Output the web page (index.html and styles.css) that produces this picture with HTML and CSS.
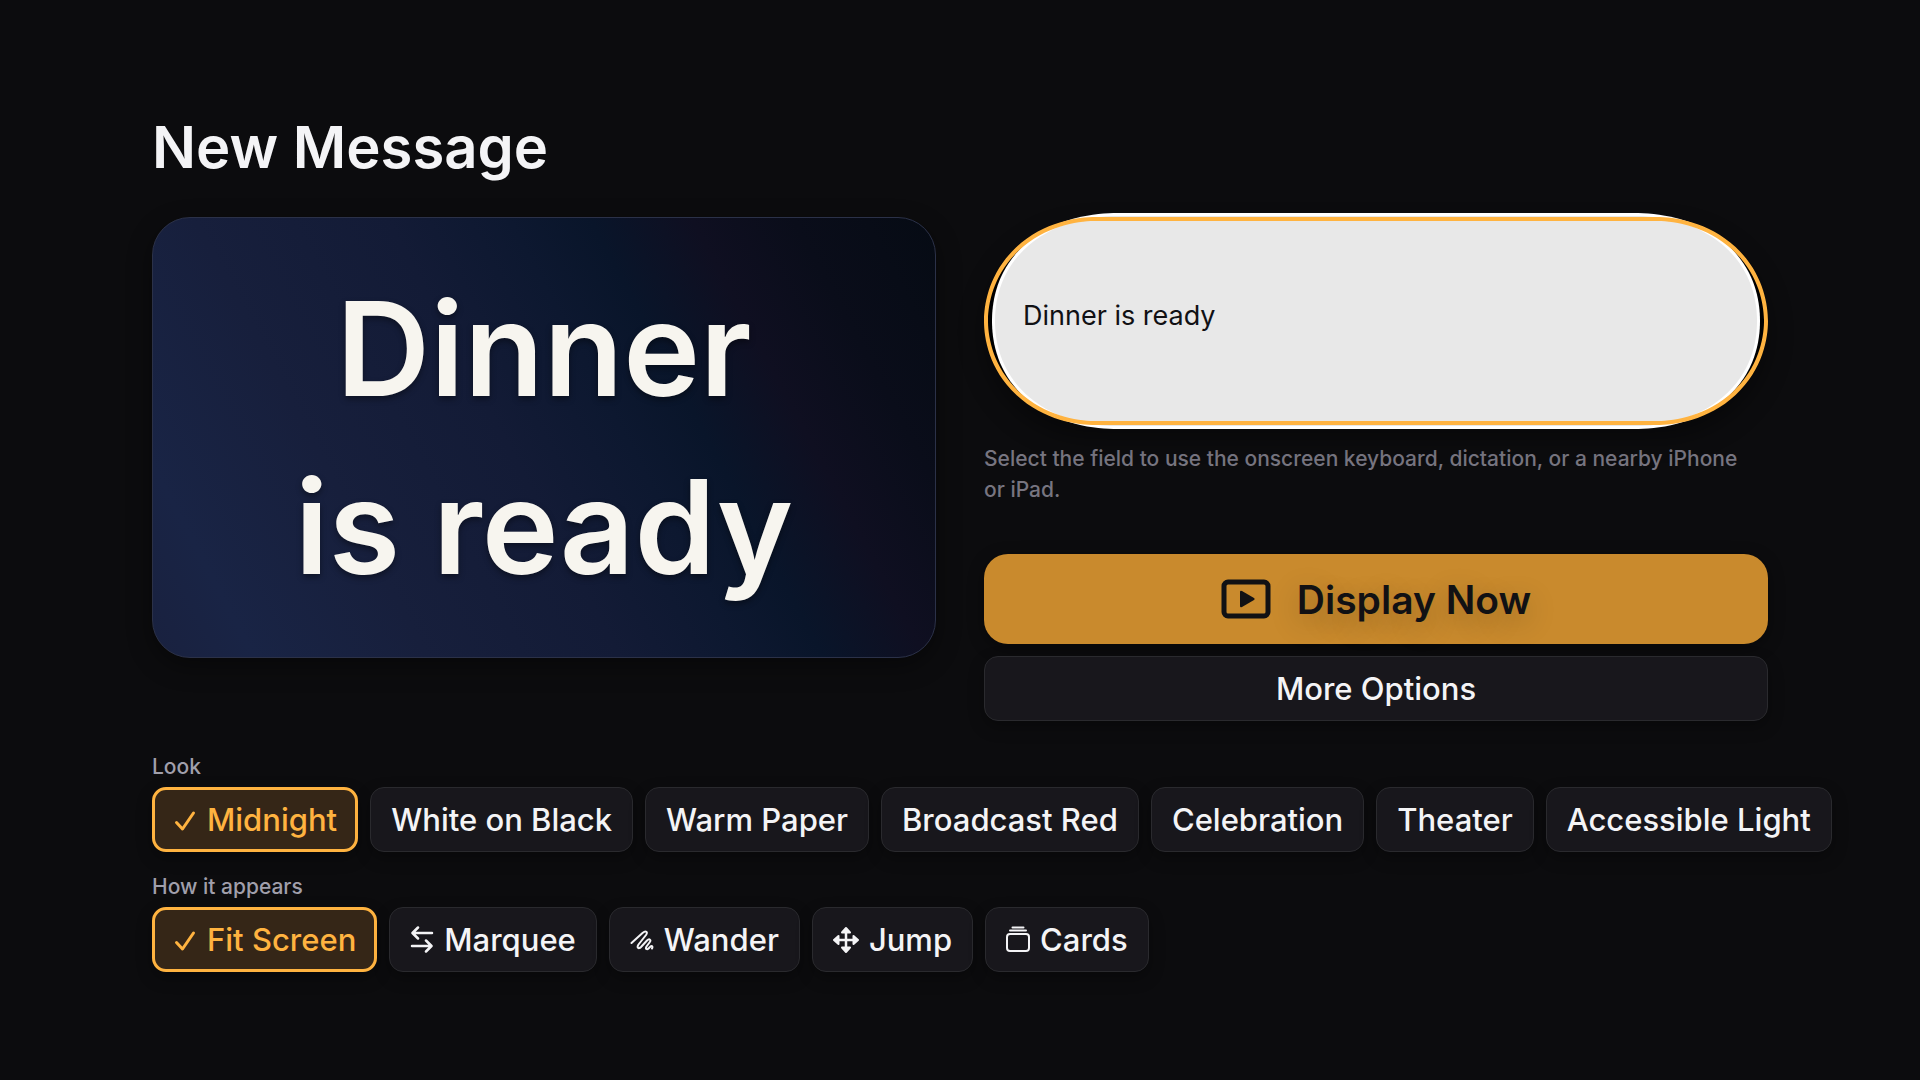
FILE: index.html
```html
<!DOCTYPE html>
<html lang="en">
<head>
  <meta charset="UTF-8">
  <meta name="viewport" content="width=device-width, initial-scale=1.0">
  <title>New Message</title>
  <link rel="stylesheet" href="styles.css">
</head>
<body>
  <main class="page">
    <h1>New Message</h1>

    <div class="editor">
      <!-- Preview -->
      <section class="preview" aria-label="Preview">
        <p>Dinner<br>is ready</p>
      </section>

      <!-- Message field and actions -->
      <form class="compose">
        <div class="field">
          <input type="text" aria-label="Message" aria-describedby="hint" value="Dinner is ready">
        </div>
        <p class="hint" id="hint">Select the field to use the onscreen keyboard, dictation, or a nearby iPhone or iPad.</p>
        <button type="button" class="btn-display">
          <svg width="50" height="40" viewBox="0 0 50 40" aria-hidden="true">
            <rect x="3" y="3" width="44" height="34" rx="4" fill="none" stroke="currentColor" stroke-width="5"/>
            <path d="M19 13v14q0 2 2 1l12-7q1.500-1 0-2l-12-7q-2-1-2 1z" fill="currentColor"/>
          </svg>
          Display Now
        </button>
        <button type="button" class="btn-more">More Options</button>
      </form>
    </div>

    <!-- Look -->
    <section class="group">
      <h2>Look</h2>
      <div class="chips">
        <button type="button" class="chip selected" aria-pressed="true">
          <svg width="24" height="28" viewBox="0 0 24 28" aria-hidden="true"><path d="M3.500 16.500l6 6.500L20.500 7"/></svg>
          Midnight
        </button>
        <button type="button" class="chip">White on Black</button>
        <button type="button" class="chip">Warm Paper</button>
        <button type="button" class="chip">Broadcast Red</button>
        <button type="button" class="chip">Celebration</button>
        <button type="button" class="chip">Theater</button>
        <button type="button" class="chip">Accessible Light</button>
      </div>
    </section>

    <!-- How it appears -->
    <section class="group">
      <h2>How it appears</h2>
      <div class="chips">
        <button type="button" class="chip selected" aria-pressed="true">
          <svg width="24" height="28" viewBox="0 0 24 28" aria-hidden="true"><path d="M3.500 16.500l6 6.500L20.500 7"/></svg>
          Fit Screen
        </button>
        <button type="button" class="chip">
          <svg width="24" height="28" viewBox="0 0 24 28" aria-hidden="true"><path class="medium" d="M22 7H3M8 1.500L2.500 7 8 12.500M2 20h19M16 14.500l5.500 5.500-5.500 5.500"/></svg>
          Marquee
        </button>
        <button type="button" class="chip">
          <svg width="24" height="28" viewBox="0 0 24 28" aria-hidden="true"><path class="thin" d="M1.500 17L12.500 7C16 4 18 6 16 9L8.500 18.500C6.500 21.500 8.500 23.500 11 21L17 14.500C19.500 12 21.500 14 19.500 16.500L16.500 20.500C15 23 17 24 18.500 22.500L20 21C22 19 23 20.500 22 22.500"/></svg>
          Wander
        </button>
        <button type="button" class="chip">
          <svg width="26" height="28" viewBox="0 0 26 28" aria-hidden="true"><path class="medium" d="M13 5v18M4 14h18"/><path class="solid" d="M13 2l4 4.500h-8zM13 26l4-4.500h-8zM1 14l4.500-4v8zM25 14l-4.500-4v8z"/></svg>
          Jump
        </button>
        <button type="button" class="chip">
          <svg width="24" height="28" viewBox="0 0 24 28" aria-hidden="true"><rect class="thin" x="1" y="8" width="22" height="17" rx="3"/><path class="thin" d="M4 4.500h16M6.500 1.500h11"/></svg>
          Cards
        </button>
      </div>
    </section>
  </main>
</body>
</html>
```
FILE: styles.css
```css
:root {
  --bg: #0c0c0e;
  --surface: #18171c;
  --line: #2a2a2e;
  --text: #f4f4f6;
  --muted: #a09fab;
  --faint: #777580;
  --amber: #ffb340;
}

* {
  box-sizing: border-box;
}

body {
  margin: 0;
  min-height: 100vh;
  background: var(--bg);
  color: var(--text);
  font-family: Inter, "Liberation Sans", sans-serif;
  overflow-x: hidden;
}

.page {
  padding: 108px 152px;
}

h1 {
  margin: 0 0 31px;
  font-size: 58px;
  line-height: 78px;
  font-weight: 600;
}

.editor {
  display: grid;
  grid-template-columns: 1fr 1fr;
  gap: 48px;
  align-items: start;
}

.preview {
  display: flex;
  align-items: center;
  justify-content: center;
  aspect-ratio: 16 / 9;
  border: 1px solid #2b3148;
  border-radius: 38px;
  background: linear-gradient(62deg, #19213f 0%, #192445 10%, #171f3c 27%, #131b36 46%, #0d1830 58%, #09152a 66%, #0f0f21 76%, #0a0d1a 86%, #060b14 100%);
  box-shadow: 0 8px 24px rgba(0, 0, 0, 0.4);
}

.preview p {
  margin: 0;
  color: #f7f5ef;
  font-size: 130px;
  line-height: 178px;
  font-weight: 600;
  text-align: center;
  text-shadow: 0 3px 6px rgba(0, 0, 0, 0.4);
}

.compose {
  display: flex;
  flex-direction: column;
}

/* the amber ring sits over the focused input */
.field {
  position: relative;
  height: 208px;
  padding: 0 8px;
  border-radius: 112px / 104px;
  corner-shape: superellipse(1.02);
  background: #000;
  box-shadow: 0 12px 24px rgba(0, 0, 0, 0.4);
}

.field::after {
  content: "";
  position: absolute;
  inset: 0;
  border: 4px solid var(--amber);
  border-radius: 112px / 104px;
  corner-shape: superellipse(1.02);
  pointer-events: none;
}

.field input {
  display: block;
  width: 100%;
  height: 216px;
  margin: -4px 0;
  padding: 0 28px 12px;
  border: 3px solid #fff;
  border-radius: 126px / 108px;
  corner-shape: superellipse(1.1);
  background: #e8e8e8;
  color: #111114;
  font: 400 27px Inter, "Liberation Sans", sans-serif;
  outline: none;
}

.hint {
  margin: 18px 0 49px;
  padding-right: 24px;
  color: var(--faint);
  font-size: 21px;
  line-height: 31px;
  font-weight: 500;
}

button {
  display: flex;
  align-items: center;
  justify-content: center;
  font-family: inherit;
  white-space: nowrap;
  cursor: pointer;
}

.btn-display {
  gap: 26px;
  height: 90px;
  margin-bottom: 12px;
  border: none;
  border-radius: 24px;
  background: #c98a2d;
  color: #111114;
  font-size: 39px;
  font-weight: 600;
  box-shadow: 0 4px 16px rgba(0, 0, 0, 0.4);
  text-shadow: 0 8px 28px rgba(0, 0, 0, 0.25);
}

.btn-more,
.chip {
  height: 65px;
  border: 1px solid var(--line);
  border-radius: 14px;
  background: var(--surface);
  color: var(--text);
  font-size: 31px;
  font-weight: 500;
  box-shadow: 0 6px 16px rgba(0, 0, 0, 0.3);
}

.group {
  margin-top: 20px;
}

.editor + .group {
  margin-top: 31px;
}

h2 {
  margin: 0 0 6px;
  color: var(--muted);
  font-size: 21px;
  line-height: 29px;
  font-weight: 500;
}

.chips {
  display: flex;
  gap: 12px;
}

.chip {
  flex: none;
  gap: 10px;
  padding: 0 20px;
}

.chip svg {
  fill: none;
  stroke: currentColor;
  stroke-width: 3;
  stroke-linecap: round;
  stroke-linejoin: round;
}

.chip .medium {
  stroke-width: 2.5;
}

.chip .thin {
  stroke-width: 2;
}

.chip .solid {
  fill: currentColor;
  stroke-width: 2;
}

.chip.selected {
  padding: 0 18px;
  border: 3px solid var(--amber);
  background: #352617;
  color: var(--amber);
}
```
